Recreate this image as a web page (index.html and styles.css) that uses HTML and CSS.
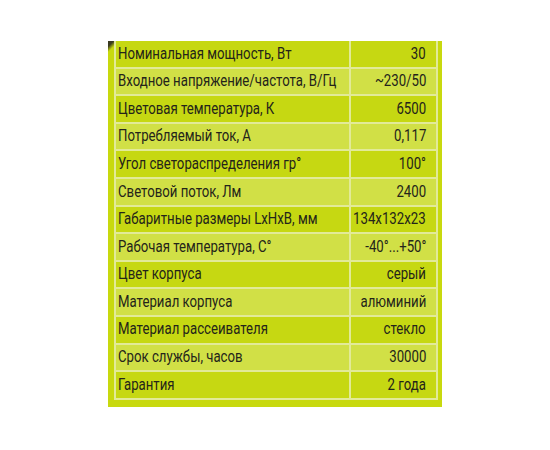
FILE: index.html
```html
<!DOCTYPE html>
<html lang="ru">
<head>
<meta charset="utf-8">
<link rel="stylesheet" href="styles.css">
</head>
<body>
<div class="panel">
  <table class="specs">
    <colgroup><col class="c-name"><col class="c-val"></colgroup>
    <tr><td><span class="t">Номинальная мощность, Вт</span></td><td class="v"><div class="r"><span class="t">30</span></div></td></tr>
    <tr><td><span class="t">Входное напряжение/частота, В/Гц</span></td><td class="v"><div class="r"><span class="t">~230/50</span></div></td></tr>
    <tr><td><span class="t">Цветовая температура, К</span></td><td class="v"><div class="r"><span class="t">6500</span></div></td></tr>
    <tr><td><span class="t">Потребляемый ток, А</span></td><td class="v"><div class="r"><span class="t">0,117</span></div></td></tr>
    <tr><td><span class="t">Угол светораспределения гр°</span></td><td class="v"><div class="r"><span class="t">100°</span></div></td></tr>
    <tr><td><span class="t">Световой поток, Лм</span></td><td class="v"><div class="r"><span class="t">2400</span></div></td></tr>
    <tr><td><span class="t">Габаритные размеры LxHxB, мм</span></td><td class="v"><div class="r"><span class="t">134x132x23</span></div></td></tr>
    <tr><td><span class="t">Рабочая температура, С°</span></td><td class="v"><div class="r"><span class="t">-40°...+50°</span></div></td></tr>
    <tr><td><span class="t">Цвет корпуса</span></td><td class="v"><div class="r"><span class="t">серый</span></div></td></tr>
    <tr><td><span class="t">Материал корпуса</span></td><td class="v"><div class="r"><span class="t">алюминий</span></div></td></tr>
    <tr><td><span class="t">Материал рассеивателя</span></td><td class="v"><div class="r"><span class="t">стекло</span></div></td></tr>
    <tr><td><span class="t">Срок службы, часов</span></td><td class="v"><div class="r"><span class="t">30000</span></div></td></tr>
    <tr><td><span class="t">Гарантия</span></td><td class="v"><div class="r"><span class="t">2 года</span></div></td></tr>
  </table>
</div>
</body>
</html>
```
FILE: styles.css
```css
html, body {
  margin: 0;
  padding: 0;
  background: #ffffff;
}
body {
  padding: 41px 0 0 108px;
}
.panel {
  width: 334px;
  height: 366px;
  box-sizing: border-box;
  padding: 0 6px 10px 6px;
  background: #c8d90e;
  background-image: linear-gradient(135deg, #3a3a20 0, #3a3a20 4px, rgba(0,0,0,0) 8px);
}
.specs {
  width: 322px;
  table-layout: fixed;
  border-collapse: collapse;
  font-family: Roboto, "Liberation Sans", sans-serif;
  font-size: 16.5px;
  font-weight: 400;
  color: #24241a;
}
.c-name { width: 235px; }
.c-val { width: 87px; }
.specs td {
  height: 25.6px;
  padding: 0 0 0 2px;
  border: 2px solid #e2ea98;
  white-space: nowrap;
  line-height: 1;
}
.specs tr:first-child td {
  border-top: none;
}
.specs tr:nth-child(odd) td {
  background: #c6d812;
}
.specs tr:nth-child(even) td {
  background: #d1e046;
}
.specs td.v {
  padding: 0 10px 0 0;
}
.r {
  display: flex;
  justify-content: flex-end;
}
.t {
  display: inline-block;
  transform: scaleX(0.8);
  transform-origin: left center;
}
.v .t {
  flex: none;
  transform-origin: right center;
}
```
